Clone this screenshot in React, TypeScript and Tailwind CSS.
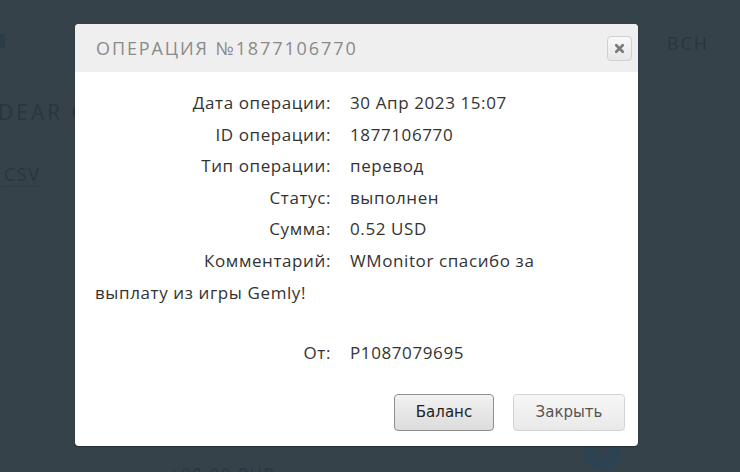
import { X } from "lucide-react"

const rows: [string, string][] = [
  ["Дата операции:", "30 Апр 2023 15:07"],
  ["ID операции:", "1877106770"],
  ["Тип операции:", "перевод"],
  ["Статус:", "выполнен"],
  ["Сумма:", "0.52 USD"],
]

function Row({ label, value }: { label: string; value: string }) {
  return (
    <div>
      <span className="inline-block w-[236px] mr-[19px] text-right">{label}</span>
      {value}
    </div>
  )
}

export default function App() {
  return (
    <main className="relative w-[740px] h-[472px] overflow-hidden bg-[#36424a] font-['Open_Sans',sans-serif]">
      {/* page behind the overlay */}
      <div className="flex flex-col h-full text-[#2b353c]">
        <div className="flex justify-between pt-[34px]">
          <div className="w-[5px] h-[14px] bg-[#2c3c47]" />
          <div className="pr-[31px] text-[18px] tracking-[2px] leading-none">BCH</div>
        </div>
        <div className="mt-[50px] -ml-[2px] text-[21px] tracking-[3px] leading-none">DEAR CAPITAL</div>
        <div className="mt-[42px] w-[38px] pl-[4px] pb-[3px] text-[18px] tracking-[1.5px] leading-none border-b border-dotted border-[#2b353c]">
          CSV
        </div>
        <div className="flex items-start mt-auto">
          <div className="ml-[170px] mt-[30px] -mb-[14px] text-[16px] tracking-[2px]">+00.00 RUB</div>
          <div className="ml-auto mr-[119px] w-[38px] h-[38px] -mb-[20px] rounded-full bg-[#2e4352] flex justify-center pt-[8px] text-[#36424a] font-bold text-[18px]">
            P
          </div>
        </div>
      </div>

      {/* modal */}
      <div className="absolute left-[75px] top-[24px] w-[563px] h-[422px] bg-white rounded-[4px] overflow-hidden shadow-[0_1px_2px_rgba(0,0,0,0.3)]">
        <div className="flex items-center justify-between h-[48px] pl-[21px] pr-[6px] bg-[#efefef]">
          <h2 className="text-[18px] tracking-[1.9px] text-[#8a8a8a]">ОПЕРАЦИЯ №1877106770</h2>
          <button className="flex items-center justify-center w-[25px] h-[25px] border border-[#d0d0d0] rounded-[4px] bg-gradient-to-b from-[#f8f8f8] to-[#e8e8e8]">
            <X className="w-[13px] h-[13px] text-[#7a7a7a]" strokeWidth={5} />
          </button>
        </div>

        <div className="pt-[15px] pl-[20px] pr-[44px] text-[17px] tracking-[0.6px] leading-[31.6px] text-[#333]">
          {rows.map(([label, value]) => (
            <Row key={label} label={label} value={value} />
          ))}
          <div>
            <span className="inline-block w-[236px] mr-[19px] text-right">Комментарий:</span>
            WMonitor спасибо за выплату из игры Gemly!
          </div>
          <div className="mt-[29px]">
            <span className="inline-block w-[236px] mr-[19px] text-right">От:</span>
            P1087079695
          </div>
        </div>

        <div className="flex justify-end gap-[19px] pt-[25px] pr-[13px] font-['DejaVu_Sans',sans-serif] text-[15px]">
          <button className="w-[100px] h-[37px] rounded-[4px] border border-[#8f8f8f] bg-gradient-to-b from-[#f2f2f2] to-[#dcdcdc] text-[#222]">
            Баланс
          </button>
          <button className="w-[112px] h-[37px] rounded-[4px] border border-[#d3d3d3] bg-gradient-to-b from-[#f7f7f7] to-[#e9e9e9] text-[#555]">
            Закрыть
          </button>
        </div>
      </div>
    </main>
  )
}
